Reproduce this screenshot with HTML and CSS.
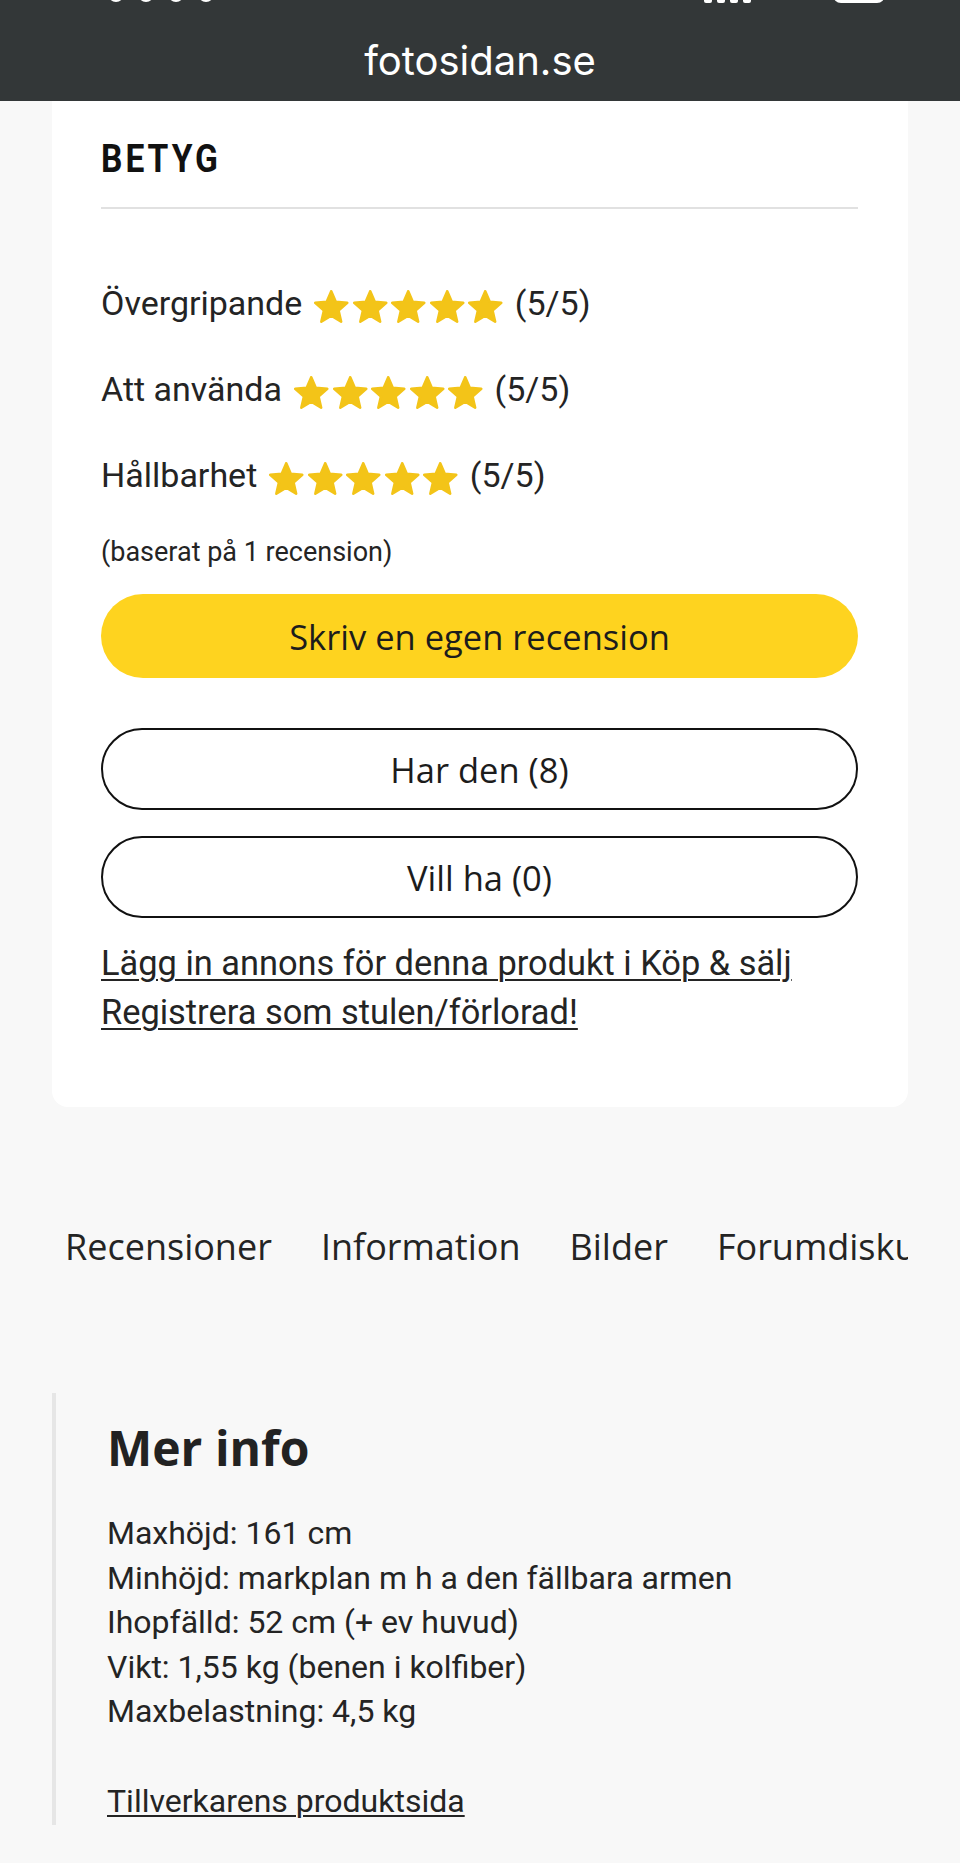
FILE: index.html
```html
<!DOCTYPE html>
<html lang="sv">
<head>
    <meta charset="UTF-8" />
    <meta name="viewport" content="width=device-width, initial-scale=1.0" />
    <title>Betyg - fotosidan.se</title>
    <link rel="stylesheet" href="styles.css">
</head>
<body>
    <header class="adressfalt">
        <!-- Rester av statusraden, bara nederkanten syns -->
        <span class="status-tid">
            <i></i><i></i><i></i><i></i>
        </span>
        <span class="status-signal">
            <i></i><i></i><i></i><i></i>
        </span>
        <span class="status-batteri"></span>
        <div class="adress">fotosidan.se</div>
    </header>

    <section class="betyg-kort">
        <h2>BETYG</h2>

        <div class="betyg-lista">
            <div class="betyg-rad">
                <span>Övergripande</span>
                <span class="stjarnor">
                    <svg viewBox="0 0 24 24"><path d="M12 17.27L18.18 21l-1.64-7.03L22 9.24l-7.19-.61L12 2 9.19 8.63 2 9.24l5.46 4.73L5.82 21z"/></svg>
                    <svg viewBox="0 0 24 24"><path d="M12 17.27L18.18 21l-1.64-7.03L22 9.24l-7.19-.61L12 2 9.19 8.63 2 9.24l5.46 4.73L5.82 21z"/></svg>
                    <svg viewBox="0 0 24 24"><path d="M12 17.27L18.18 21l-1.64-7.03L22 9.24l-7.19-.61L12 2 9.19 8.63 2 9.24l5.46 4.73L5.82 21z"/></svg>
                    <svg viewBox="0 0 24 24"><path d="M12 17.27L18.18 21l-1.64-7.03L22 9.24l-7.19-.61L12 2 9.19 8.63 2 9.24l5.46 4.73L5.82 21z"/></svg>
                    <svg viewBox="0 0 24 24"><path d="M12 17.27L18.18 21l-1.64-7.03L22 9.24l-7.19-.61L12 2 9.19 8.63 2 9.24l5.46 4.73L5.82 21z"/></svg>
                </span>
                <span>(5/5)</span>
            </div>
            <div class="betyg-rad">
                <span>Att använda</span>
                <span class="stjarnor">
                    <svg viewBox="0 0 24 24"><path d="M12 17.27L18.18 21l-1.64-7.03L22 9.24l-7.19-.61L12 2 9.19 8.63 2 9.24l5.46 4.73L5.82 21z"/></svg>
                    <svg viewBox="0 0 24 24"><path d="M12 17.27L18.18 21l-1.64-7.03L22 9.24l-7.19-.61L12 2 9.19 8.63 2 9.24l5.46 4.73L5.82 21z"/></svg>
                    <svg viewBox="0 0 24 24"><path d="M12 17.27L18.18 21l-1.64-7.03L22 9.24l-7.19-.61L12 2 9.19 8.63 2 9.24l5.46 4.73L5.82 21z"/></svg>
                    <svg viewBox="0 0 24 24"><path d="M12 17.27L18.18 21l-1.64-7.03L22 9.24l-7.19-.61L12 2 9.19 8.63 2 9.24l5.46 4.73L5.82 21z"/></svg>
                    <svg viewBox="0 0 24 24"><path d="M12 17.27L18.18 21l-1.64-7.03L22 9.24l-7.19-.61L12 2 9.19 8.63 2 9.24l5.46 4.73L5.82 21z"/></svg>
                </span>
                <span>(5/5)</span>
            </div>
            <div class="betyg-rad">
                <span>Hållbarhet</span>
                <span class="stjarnor">
                    <svg viewBox="0 0 24 24"><path d="M12 17.27L18.18 21l-1.64-7.03L22 9.24l-7.19-.61L12 2 9.19 8.63 2 9.24l5.46 4.73L5.82 21z"/></svg>
                    <svg viewBox="0 0 24 24"><path d="M12 17.27L18.18 21l-1.64-7.03L22 9.24l-7.19-.61L12 2 9.19 8.63 2 9.24l5.46 4.73L5.82 21z"/></svg>
                    <svg viewBox="0 0 24 24"><path d="M12 17.27L18.18 21l-1.64-7.03L22 9.24l-7.19-.61L12 2 9.19 8.63 2 9.24l5.46 4.73L5.82 21z"/></svg>
                    <svg viewBox="0 0 24 24"><path d="M12 17.27L18.18 21l-1.64-7.03L22 9.24l-7.19-.61L12 2 9.19 8.63 2 9.24l5.46 4.73L5.82 21z"/></svg>
                    <svg viewBox="0 0 24 24"><path d="M12 17.27L18.18 21l-1.64-7.03L22 9.24l-7.19-.61L12 2 9.19 8.63 2 9.24l5.46 4.73L5.82 21z"/></svg>
                </span>
                <span>(5/5)</span>
            </div>
        </div>

        <p class="betyg-antal">(baserat på 1 recension)</p>

        <a href="#" class="knapp knapp-gul">Skriv en egen recension</a>
        <a href="#" class="knapp knapp-ram knapp-forsta">Har den (8)</a>
        <a href="#" class="knapp knapp-ram">Vill ha (0)</a>

        <div class="kort-lankar">
            <a href="#">Lägg in annons för denna produkt i Köp &amp; sälj</a><br>
            <a href="#">Registrera som stulen/förlorad!</a>
        </div>
    </section>

    <nav class="flikar">
        <a href="#">Recensioner</a>
        <a href="#">Information</a>
        <a href="#">Bilder</a>
        <a href="#">Forumdiskussioner</a>
    </nav>

    <section class="mer-info">
        <h2>Mer info</h2>
        <p>
            Maxhöjd: 161 cm<br>
            Minhöjd: markplan m h a den fällbara armen<br>
            Ihopfälld: 52 cm (+ ev huvud)<br>
            Vikt: 1,55 kg (benen i kolfiber)<br>
            Maxbelastning: 4,5 kg
        </p>
        <a href="#" class="tillverkare">Tillverkarens produktsida</a>
    </section>
</body>
</html>
```

FILE: styles.css
```css
:root {
    --mork: #333738;
    --text: #242424;
    --gul: #fed31f;
    --stjarna: #f3c418;
    --bakgrund: #f8f8f8;
    --linje: #e1e1e1;
}

* {
    margin: 0;
    padding: 0;
    box-sizing: border-box;
}

body {
    font-family: Roboto, 'Noto Sans', sans-serif;
    background-color: var(--bakgrund);
    color: var(--text);
    overflow-x: hidden;
}

/* adressfältet överst */
.adressfalt {
    position: relative;
    background: var(--mork);
    height: 101px;
    padding-top: 37px;
    overflow: hidden;
}

.adress {
    font-family: Inter, Roboto, sans-serif;
    font-size: 40px;
    line-height: 48px;
    color: #fff;
    text-align: center;
}

.status-tid,
.status-signal {
    position: absolute;
    top: -20px;
    display: flex;
    gap: 8px;
}

.status-tid {
    left: 108px;
    gap: 14px;
}

.status-signal {
    left: 704px;
    gap: 5px;
}

.status-tid i {
    display: block;
    width: 16px;
    height: 22px;
    border: 3px solid #fff;
    border-radius: 8px;
}

.status-signal i {
    display: block;
    width: 8px;
    height: 23px;
    background: #fff;
    border-radius: 2px;
}

.status-batteri {
    position: absolute;
    left: 833px;
    top: -20px;
    width: 52px;
    height: 23px;
    background: #fff;
    border-radius: 8px;
}

/* kortet med betyg */
.betyg-kort {
    margin: 0 52px;
    background: #fff;
    border-radius: 0 0 16px 16px;
    padding: 35px 50px 70px 49px;
}

.betyg-kort h2 {
    display: inline-block;
    font-size: 39px;
    line-height: 46px;
    font-weight: 700;
    letter-spacing: 3.5px;
    color: #111;
    transform: scaleX(0.86);
    transform-origin: left center;
}

.betyg-lista {
    border-top: 2px solid var(--linje);
    margin-top: 25px;
    padding-top: 74px;
    display: flex;
    flex-direction: column;
    gap: 46px;
}

.betyg-rad {
    display: flex;
    align-items: center;
    gap: 10px;
    font-size: 34px;
    line-height: 40px;
    height: 40px;
}

.stjarnor {
    display: flex;
    margin: 4px 0 -4px;
}

.stjarnor svg {
    width: 38.5px;
    height: 38.5px;
    fill: var(--stjarna);
    stroke: var(--stjarna);
    stroke-width: 1.6;
    stroke-linejoin: round;
}

.betyg-antal {
    font-size: 27px;
    line-height: 32px;
    margin-top: 41px;
}

.knapp {
    display: flex;
    align-items: center;
    justify-content: center;
    font-family: 'Open Sans', sans-serif;
    font-size: 34.5px;
    color: #1c1c1c;
    text-decoration: none;
    border-radius: 999px;
}

.knapp-gul {
    background: var(--gul);
    height: 84px;
    margin-top: 26px;
}

.knapp-ram {
    height: 82px;
    border: 2px solid #111;
    margin-top: 26px;
}

.knapp-forsta {
    margin-top: 50px;
}

.kort-lankar {
    margin-top: 21px;
    font-size: 34.4px;
    line-height: 49px;
}

.kort-lankar a {
    color: var(--text);
    text-underline-offset: 4px;
    text-decoration-thickness: 2px;
}

/* flikarna */
.flikar {
    margin: 116px 52px 0;
    padding-left: 13px;
    display: flex;
    gap: 49px;
    overflow: hidden;
    white-space: nowrap;
}

.flikar a {
    font-family: 'Open Sans', sans-serif;
    font-size: 36px;
    line-height: 48px;
    color: var(--text);
    text-decoration: none;
}

/* mer info */
.mer-info {
    margin: 122px 52px 0;
    border-left: 4px solid #e6e6e6;
    padding: 26px 0 2px 51px;
}

.mer-info h2 {
    font-family: 'Open Sans', sans-serif;
    font-size: 48px;
    line-height: 58px;
    font-weight: 700;
    color: #222;
}

.mer-info p {
    margin-top: 34px;
    font-size: 32px;
    line-height: 44.5px;
}

.tillverkare {
    display: inline-block;
    margin-top: 45px;
    font-size: 32px;
    line-height: 44.5px;
    color: var(--text);
    text-underline-offset: 3px;
    text-decoration-thickness: 2px;
}
```
